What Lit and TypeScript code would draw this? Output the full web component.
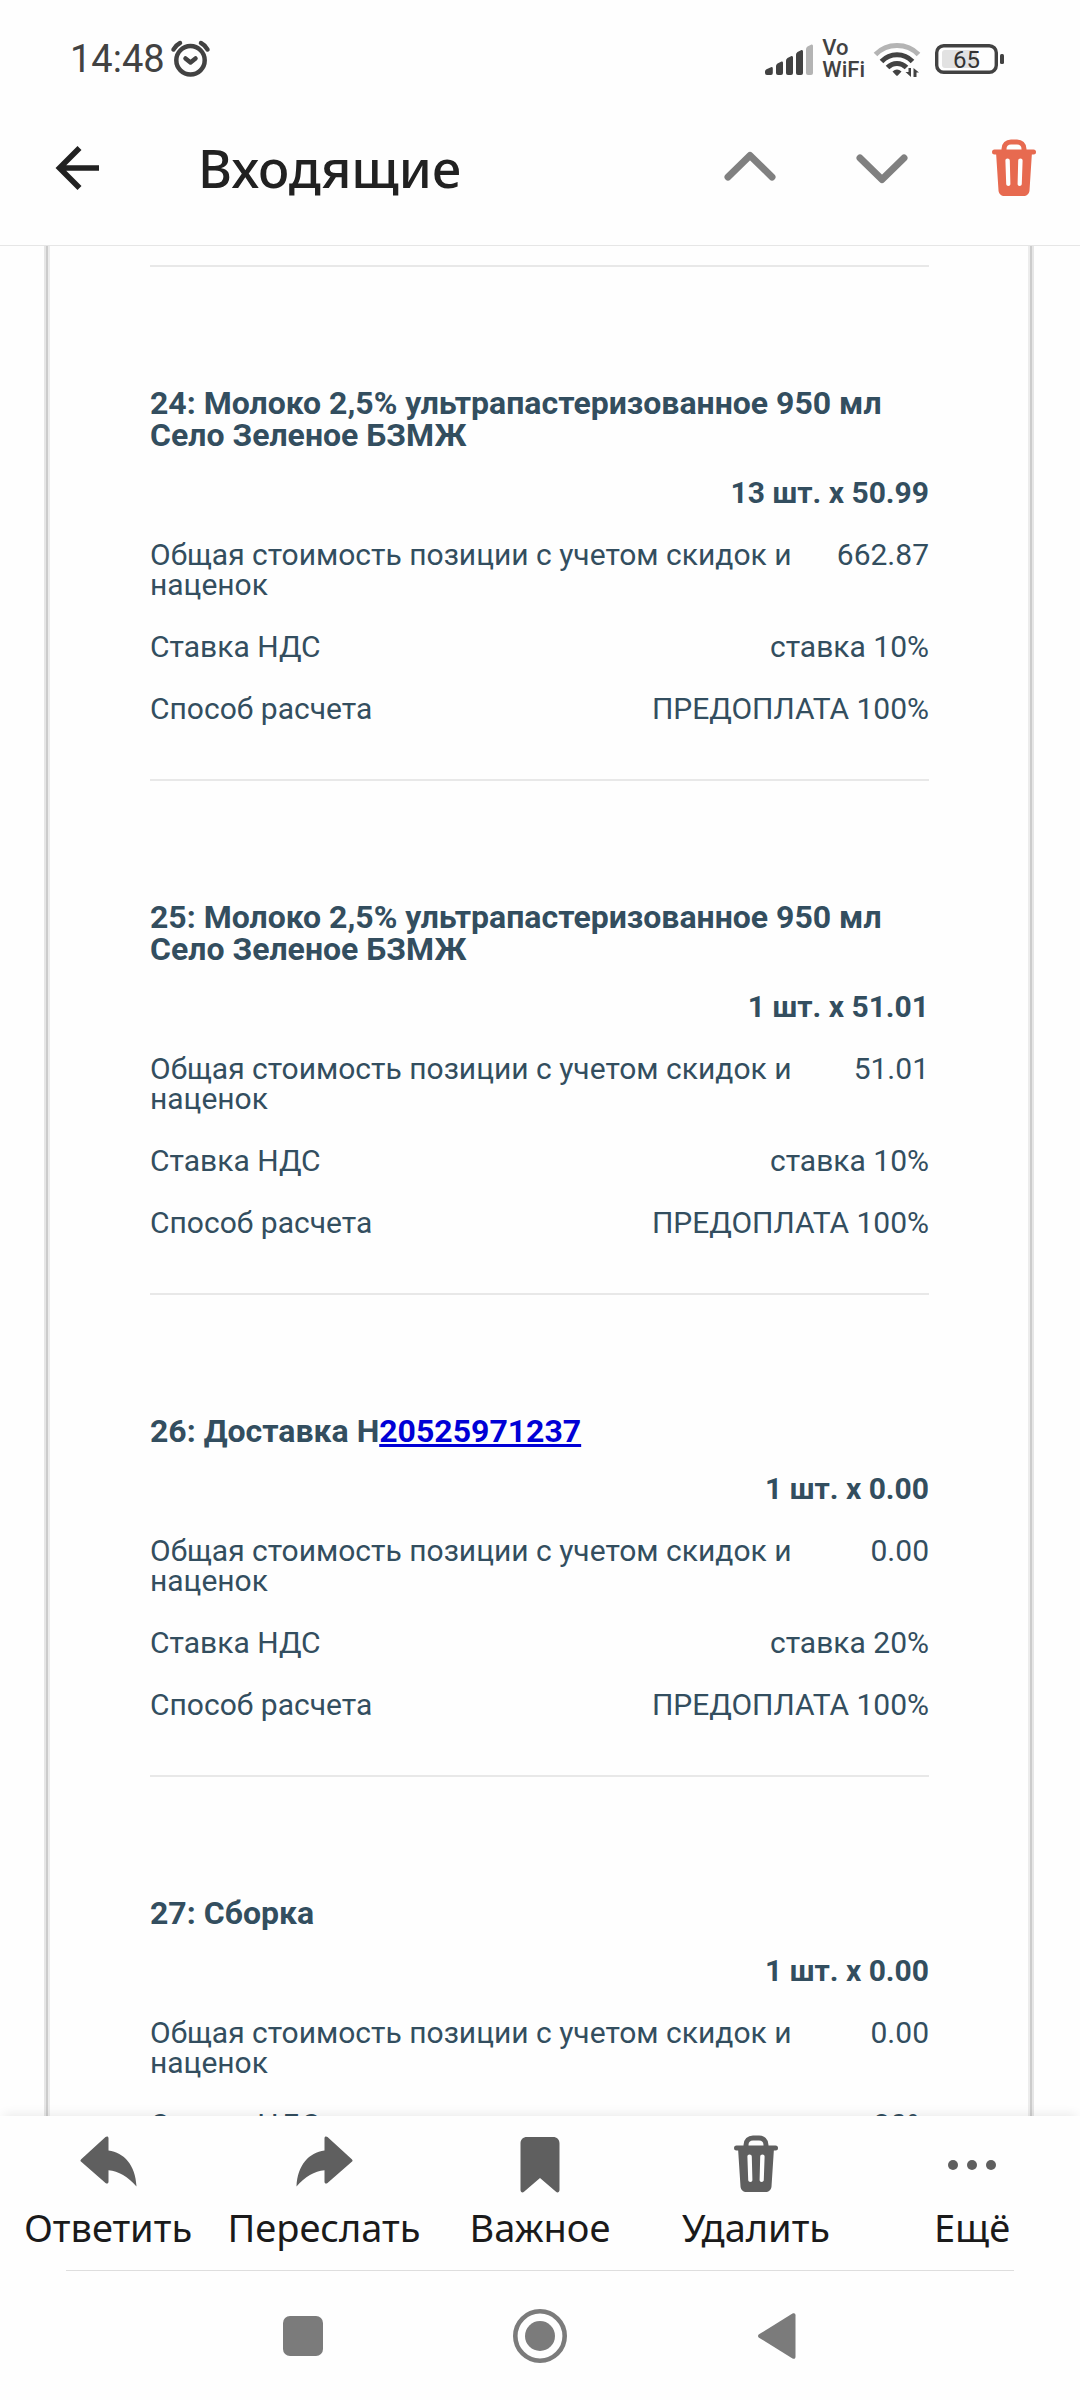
import { LitElement, html, svg, css, nothing } from "lit";
import { customElement, property } from "lit/decorators.js";

interface ReceiptPosition {
  title: string;
  link?: string;
  amount: string;
  total: string;
  rate: string;
}

const POSITIONS: ReceiptPosition[] = [
  { title: "24: Молоко 2,5% ультрапастеризованное 950 мл Село Зеленое БЗМЖ", amount: "13 шт. x 50.99", total: "662.87", rate: "ставка 10%" },
  { title: "25: Молоко 2,5% ультрапастеризованное 950 мл Село Зеленое БЗМЖ", amount: "1 шт. x 51.01", total: "51.01", rate: "ставка 10%" },
  { title: "26: Доставка H", link: "20525971237", amount: "1 шт. x 0.00", total: "0.00", rate: "ставка 20%" },
  { title: "27: Сборка", amount: "1 шт. x 0.00", total: "0.00", rate: "ставка 20%" },
];

const trash = html`<svg width="44" height="58" viewBox="0 0 44 58" aria-hidden="true">
  <path d="M12 13V10C12 5.500 15 3 19 3H25C29 3 32 5.500 32 10V13" fill="none" stroke="currentColor" stroke-width="5"/>
  <rect x="0" y="10.500" width="44" height="5" rx="2.500" fill="currentColor"/>
  <path fill="currentColor" fill-rule="evenodd" d="M4 13H40L37.500 51.500C37.200 55 34.700 57 31.500 57H12.500C9.300 57 6.800 55 6.500 51.500ZM15.500 19.500C14.200 19.500 13.300 20.400 13.400 21.700L14.200 45C14.300 46.300 15.200 47 16.400 47S18.400 46.200 18.400 45L17.800 21.700C17.800 20.300 16.800 19.500 15.500 19.500ZM28.500 19.500C27.200 19.500 26.200 20.300 26.200 21.700L25.600 45C25.600 46.200 26.400 47 27.600 47S29.700 46.300 29.800 45L30.600 21.700C30.700 20.400 29.800 19.500 28.500 19.500Z"/>
</svg>`;

const arrowPath = svg`<path fill="currentColor" d="M1.200 24.200 25.500 2C27 0.800 28.500 1.500 28.500 3.200V15.500C44 17.500 55.500 30 56.500 51.500C48 42 38.500 36 28.500 35.300V46.800C28.500 48.500 27 49.200 25.500 48L1.200 26.800C0.200 25.800 0.200 25.200 1.200 24.200Z"/>`;

const reply = html`<svg width="57" height="58" viewBox="0 0 57 58" aria-hidden="true">${arrowPath}</svg>`;
const forward = html`<svg width="57" height="58" viewBox="0 0 57 58" aria-hidden="true"><g transform="translate(57 0) scale(-1 1)">${arrowPath}</g></svg>`;
const bookmark = html`<svg width="40" height="58" viewBox="0 0 40 58" aria-hidden="true">
  <path fill="currentColor" d="M7 2H33C37 2 39.500 4.500 39.500 8.500V55C39.500 57.300 37.500 58 36 56.800L20 43 4 56.800C2.500 58 0.500 57.300 0.500 55V8.500C0.500 4.500 3 2 7 2Z"/>
</svg>`;
const dots = html`<svg width="50" height="58" viewBox="0 0 50 58" aria-hidden="true" fill="currentColor">
  <circle cx="6" cy="30" r="5"/><circle cx="25" cy="30" r="5"/><circle cx="44" cy="30" r="5"/>
</svg>`;

const ACTIONS = [
  { label: "Ответить", icon: reply },
  { label: "Переслать", icon: forward },
  { label: "Важное", icon: bookmark },
  { label: "Удалить", icon: trash },
  { label: "Ещё", icon: dots },
];

@customElement("status-bar")
export class StatusBar extends LitElement {
  static styles = css`
    :host { display: flex; align-items: center; gap: 8px; min-height: 62px; padding: 28px 75px 0 70px; color: #424242; font-family: Roboto, "Liberation Sans", sans-serif; }
    svg { display: block; flex: none; }
    .clock { font-size: 38px; line-height: 40px; }
    .spacer { flex: 1; }
    .calls { display: flex; flex-direction: column; font-size: 22px; line-height: 22px; font-weight: 500; }
    .battery { margin-left: 6px; }
    .charge { font-size: 24px; }
  `;

  render() {
    return html`
      <span class="clock">14:48</span>
      <svg width="40" height="38" viewBox="172 40 40 38" fill="none" stroke="currentColor" stroke-width="4.500" stroke-linecap="round" stroke-linejoin="round" overflow="visible" aria-hidden="true">
        <circle cx="189.500" cy="60.300" r="14.200"/>
        <path d="M172.500 49.500C174 46.700 176 44.500 179 43M206.500 49.500C205 46.700 203 44.500 200 43M184.500 58.500 189.500 62.500 194.500 58.500"/>
      </svg>
      <span class="spacer"></span>
      <svg width="50" height="38" viewBox="764 40 50 38" fill="currentColor" aria-hidden="true">
        <path d="M765 71.500Q765 70 766.500 69.300L771 67.200Q772.800 66.800 772.800 68.500V73Q772.800 75 771 75H767Q765 75 765 73Z"/>
        <path d="M776 66Q776 64.500 777.500 63.500L781.500 61.600Q783 61.300 783 63V73Q783 75 781 75H778Q776 75 776 73Z"/>
        <path d="M786 60.500Q786 59 787.500 58L791.500 56Q793 55.700 793 57.500V73Q793 75 791 75H788Q786 75 786 73Z"/>
        <path d="M796 54.500Q796 53 797.500 52L801.500 50Q803 49.700 803 51.500V73Q803 75 801 75H798Q796 75 796 73Z"/>
        <path fill="#b4b4b4" d="M806 49Q806 47.500 807.500 46.500L811.500 44.500Q813 44.200 813 46V73Q813 75 811 75H808Q806 75 806 73Z"/>
      </svg>
      <span class="calls"><span>Vo</span><span>WiFi</span></span>
      <svg width="48" height="38" viewBox="873 40 48 38" aria-hidden="true">
        <g fill="none" stroke="currentColor" stroke-width="5">
          <path stroke="#b4b4b4" d="M875.500 54.500C887 42.500 907 42.500 918.500 54.500"/>
          <path d="M881.500 61.500C890 52.500 904 52.500 912.500 61.500"/>
          <path d="M887.500 67.500C893 62 901 62 906.500 67.500"/>
        </g>
        <path fill="currentColor" d="M892.500 71.500Q897 67.500 901.500 71.500L898 75.300Q897 76.300 896 75.300Z"/>
        <path fill="currentColor" d="M908.500 68H911V77L905.500 72H908.500ZM913.500 77V68L919 72.500H916.500V77Z"/>
      </svg>
      <svg class="battery" width="70" height="38" viewBox="935 40 70 38" aria-label="65%">
        <rect x="936.700" y="45.700" width="59.600" height="26.600" rx="7" fill="none" stroke="currentColor" stroke-width="3.400"/>
        <rect x="942" y="50" width="35" height="18" rx="3" fill="#e2e2e2"/>
        <rect x="1000" y="54" width="4" height="10" rx="1.500" fill="currentColor"/>
        <text class="charge" x="966.500" y="68" text-anchor="middle" fill="#333">65</text>
      </svg>
    `;
  }
}

@customElement("receipt-position")
export class ReceiptPositionView extends LitElement {
  @property({ attribute: false }) position!: ReceiptPosition;

  static styles = css`
    :host { display: block; padding: 120px 0 55px; border-bottom: 2px solid #e8e8e8; color: #334e5f; font-size: 30px; line-height: 30px; }
    .title { margin: 0 0 27px; font-size: 32px; line-height: 32px; font-weight: 700; }
    .title a { color: #0000d6; text-decoration-thickness: 3px; }
    .amount { margin: 0; font-weight: 700; text-align: right; }
    .facts { margin: 0; }
    .fact { display: flex; gap: 40px; margin-top: 32px; }
    .fact dt { flex: 1; }
    .fact dd { margin: 0; flex: none; white-space: nowrap; text-align: right; }
  `;

  render() {
    const p = this.position;
    const facts = [
      ["Общая стоимость позиции с учетом скидок и наценок", p.total],
      ["Ставка НДС", p.rate],
      ["Способ расчета", "ПРЕДОПЛАТА 100%"],
    ];
    return html`
      <h2 class="title">${p.title}${p.link ? html`<a href="tel:${p.link}">${p.link}</a>` : nothing}</h2>
      <p class="amount">${p.amount}</p>
      <dl class="facts">
        ${facts.map(([name, value]) => html`<div class="fact"><dt>${name}</dt><dd>${value}</dd></div>`)}
      </dl>
    `;
  }
}

@customElement("app-root")
export class AppRoot extends LitElement {
  static styles = css`
    :host { display: flex; flex-direction: column; height: 100vh; background: #fefefe; font-family: Roboto, "Liberation Sans", sans-serif; }
    svg { display: block; flex: none; }
    button { display: flex; align-items: center; justify-content: center; margin: 0; padding: 0; border: 0; background: none; color: inherit; font: inherit; }
    .header { display: flex; align-items: stretch; flex: none; height: 155px; border-bottom: 1px solid #e6e6e6; color: #808080; }
    .back { width: 154px; color: #212121; }
    .heading { flex: 1; align-self: center; margin: 0 0 0 44px; color: #212121; font-family: "Noto Sans", "Open Sans", sans-serif; font-size: 52px; line-height: 64px; font-weight: 500; }
    .tool { width: 132px; }
    .remove { color: #e76a50; }
    .mail { flex: 1; min-height: 0; overflow: hidden; padding: 0 46px 0 44px; }
    .frame { border-left: 2px solid #e6e6e6; border-right: 2px solid #e6e6e6; }
    .frame-line { border-left: 2px solid #cccccc; border-right: 2px solid #cccccc; }
    .sheet { border-left: 2px solid #ececec; border-right: 2px solid #ececec; padding: 19px 99px 0 100px; }
    .rule { margin: 0; border: 0; border-top: 2px solid #e8e8e8; }
    .actions { display: grid; grid-template-columns: repeat(5, 1fr); flex: none; height: 154px; background: #fefefe; box-shadow: 0 -6px 10px -4px rgba(0, 0, 0, 0.08); z-index: 1; color: #5f5f5f; }
    .action { flex-direction: column; justify-content: flex-start; gap: 8px; padding-top: 19px; font-family: "Noto Sans", "Open Sans", sans-serif; font-size: 38px; line-height: 52px; }
    .caption { color: #1a1a1a; }
    .system { display: grid; grid-template-columns: repeat(3, 237px); justify-content: center; flex: none; height: 129px; margin: 0 66px; border-top: 1px solid #dedede; color: #7b7b7b; }
  `;

  render() {
    return html`
      <status-bar></status-bar>
      <header class="header">
        <button class="back" aria-label="Назад">
          <svg width="44" height="44" viewBox="0 0 44 44" fill="none" stroke="currentColor" stroke-width="5.600"><path d="M44 22H5M24.500 2 4.500 22 24.500 42"/></svg>
        </button>
        <h1 class="heading">Входящие</h1>
        <button class="tool" aria-label="Предыдущее письмо">
          <svg width="52" height="36" viewBox="0 0 52 36" fill="none" stroke="currentColor" stroke-width="7" stroke-linecap="round" stroke-linejoin="round"><path d="M4 27 26 5.500 48 27"/></svg>
        </button>
        <button class="tool" aria-label="Следующее письмо">
          <svg width="52" height="36" viewBox="0 0 52 36" fill="none" stroke="currentColor" stroke-width="7" stroke-linecap="round" stroke-linejoin="round"><path d="M4 8 26 29.500 48 8"/></svg>
        </button>
        <button class="tool remove" aria-label="Удалить письмо">${trash}</button>
      </header>
      <main class="mail">
        <div class="frame"><div class="frame-line"><div class="sheet">
          <hr class="rule" />
          ${POSITIONS.map((p) => html`<receipt-position .position=${p}></receipt-position>`)}
        </div></div></div>
      </main>
      <nav class="actions">
        ${ACTIONS.map((a) => html`<button class="action">${a.icon}<span class="caption">${a.label}</span></button>`)}
      </nav>
      <nav class="system">
        <button aria-label="Недавние приложения"><svg width="40" height="40" viewBox="0 0 40 40"><rect width="40" height="40" rx="7" fill="currentColor"/></svg></button>
        <button aria-label="Домой"><svg width="54" height="54" viewBox="0 0 54 54"><circle cx="27" cy="27" r="24.700" fill="none" stroke="currentColor" stroke-width="4.600"/><circle cx="27" cy="27" r="15" fill="currentColor"/></svg></button>
        <button aria-label="Назад в системе"><svg width="38" height="46" viewBox="0 0 38 46"><path fill="currentColor" d="M1 21.300 34.500 0.600C36.300 -0.400 37.500 0.500 37.500 2.300V43.700C37.500 45.500 36.300 46.400 34.500 45.400L1 24.700C-0.300 23.700 -0.300 22.300 1 21.300Z"/></svg></button>
      </nav>
    `;
  }
}
